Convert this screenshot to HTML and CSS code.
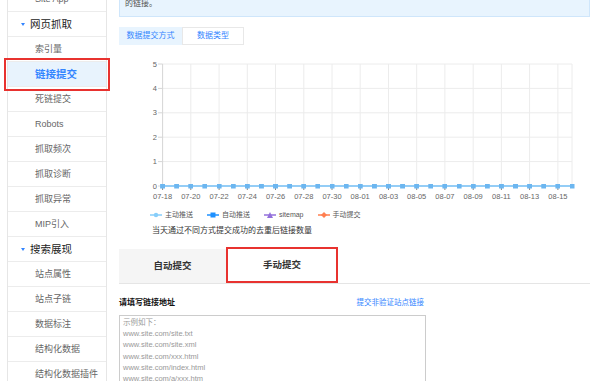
FILE: index.html
```html
<!DOCTYPE html>
<html lang="zh-CN">
<head>
    <meta charset="UTF-8">
    <meta name="viewport" content="width=device-width, initial-scale=1.0">
    <title>链接提交</title>
    <link rel="stylesheet" href="styles.css">
</head>
<body>
<div class="page">
    <!-- 左侧菜单 -->
    <aside class="sidebar">
        <div class="nav-item">Site App</div>
        <div class="nav-group">网页抓取</div>
        <div class="nav-item">索引量</div>
        <div class="nav-item active">链接提交</div>
        <div class="nav-item">死链提交</div>
        <div class="nav-item">Robots</div>
        <div class="nav-item">抓取频次</div>
        <div class="nav-item">抓取诊断</div>
        <div class="nav-item">抓取异常</div>
        <div class="nav-item">MIP引入</div>
        <div class="nav-group">搜索展现</div>
        <div class="nav-item">站点属性</div>
        <div class="nav-item">站点子链</div>
        <div class="nav-item">数据标注</div>
        <div class="nav-item">结构化数据</div>
        <div class="nav-item">结构化数据插件</div>
    </aside>

    <main class="main">
        <div class="notice">
            链接提交工具是网站主动向百度搜索推送数据的工具，本工具可缩短爬虫发现网站链接时间，网站时效性内容建议使用链接提交工具，实时向搜索推送<br>
            的链接。
        </div>

        <div class="sub-tabs">
            <span class="sub-tab on">数据提交方式</span>
            <span class="sub-tab">数据类型</span>
        </div>

        <!-- 趋势图 -->
        <svg class="chart" width="471" height="155" viewBox="0 0 471 155">
            <defs>
                <marker id="sq" markerWidth="5" markerHeight="5" refX="2.5" refY="2.5" markerUnits="userSpaceOnUse">
                    <rect width="5" height="5" fill="#6cb6f0"/>
                </marker>
            </defs>
            <g stroke="#ececec" stroke-width="1">
                <line x1="43.6" y1="14" x2="453" y2="14"/>
                <line x1="43.6" y1="38.4" x2="453" y2="38.4"/>
                <line x1="43.6" y1="62.8" x2="453" y2="62.8"/>
                <line x1="43.6" y1="87.2" x2="453" y2="87.2"/>
                <line x1="43.6" y1="111.6" x2="453" y2="111.6"/>
                <line x1="71.8" y1="14" x2="71.8" y2="136"/>
                <line x1="100.1" y1="14" x2="100.1" y2="136"/>
                <line x1="128.3" y1="14" x2="128.3" y2="136"/>
                <line x1="156.5" y1="14" x2="156.5" y2="136"/>
                <line x1="184.8" y1="14" x2="184.8" y2="136"/>
                <line x1="213" y1="14" x2="213" y2="136"/>
                <line x1="241.2" y1="14" x2="241.2" y2="136"/>
                <line x1="269.5" y1="14" x2="269.5" y2="136"/>
                <line x1="297.7" y1="14" x2="297.7" y2="136"/>
                <line x1="325.9" y1="14" x2="325.9" y2="136"/>
                <line x1="354.2" y1="14" x2="354.2" y2="136"/>
                <line x1="382.4" y1="14" x2="382.4" y2="136"/>
                <line x1="410.6" y1="14" x2="410.6" y2="136"/>
                <line x1="438.9" y1="14" x2="438.9" y2="136"/>
                <line x1="453" y1="14" x2="453" y2="136"/>
            </g>
            <g stroke="#d6d6d6" stroke-width="1">
                <line x1="43.6" y1="14" x2="43.6" y2="136"/>
                <line x1="39" y1="14" x2="43.6" y2="14"/>
                <line x1="39" y1="38.4" x2="43.6" y2="38.4"/>
                <line x1="39" y1="62.8" x2="43.6" y2="62.8"/>
                <line x1="39" y1="87.2" x2="43.6" y2="87.2"/>
                <line x1="39" y1="111.6" x2="43.6" y2="111.6"/>
                <line x1="39" y1="136" x2="43.6" y2="136"/>
            </g>
            <g stroke="#888" stroke-width="1">
                <line x1="43.6" y1="136" x2="43.6" y2="140"/>
                <line x1="71.8" y1="136" x2="71.8" y2="140"/>
                <line x1="100.1" y1="136" x2="100.1" y2="140"/>
                <line x1="128.3" y1="136" x2="128.3" y2="140"/>
                <line x1="156.5" y1="136" x2="156.5" y2="140"/>
                <line x1="184.8" y1="136" x2="184.8" y2="140"/>
                <line x1="213" y1="136" x2="213" y2="140"/>
                <line x1="241.2" y1="136" x2="241.2" y2="140"/>
                <line x1="269.5" y1="136" x2="269.5" y2="140"/>
                <line x1="297.7" y1="136" x2="297.7" y2="140"/>
                <line x1="325.9" y1="136" x2="325.9" y2="140"/>
                <line x1="354.2" y1="136" x2="354.2" y2="140"/>
                <line x1="382.4" y1="136" x2="382.4" y2="140"/>
                <line x1="410.6" y1="136" x2="410.6" y2="140"/>
                <line x1="438.9" y1="136" x2="438.9" y2="140"/>
            </g>
            <g class="axis-y" text-anchor="end">
                <text x="38" y="16.5">5</text>
                <text x="38" y="40.9">4</text>
                <text x="38" y="65.3">3</text>
                <text x="38" y="89.7">2</text>
                <text x="38" y="114.1">1</text>
                <text x="38" y="138.5">0</text>
            </g>
            <polyline fill="none" stroke="#94cdf6" stroke-width="2" marker-start="url(#sq)" marker-mid="url(#sq)" marker-end="url(#sq)"
                points="43.6,136 57.7,136 71.8,136 85.9,136 100.1,136 114.2,136 128.3,136 142.4,136 156.5,136 170.7,136 184.8,136 198.9,136 213,136 227.1,136 241.2,136 255.4,136 269.5,136 283.6,136 297.7,136 311.8,136 325.9,136 340.1,136 354.2,136 368.3,136 382.4,136 396.5,136 410.6,136 424.8,136 438.9,136 453,136"/>
            <g class="axis-x" text-anchor="middle">
                <text x="43.6" y="149">07-18</text>
                <text x="71.8" y="149">07-20</text>
                <text x="100.1" y="149">07-22</text>
                <text x="128.3" y="149">07-24</text>
                <text x="156.5" y="149">07-26</text>
                <text x="184.8" y="149">07-28</text>
                <text x="213" y="149">07-30</text>
                <text x="241.2" y="149">08-01</text>
                <text x="269.5" y="149">08-03</text>
                <text x="297.7" y="149">08-05</text>
                <text x="325.9" y="149">08-07</text>
                <text x="354.2" y="149">08-09</text>
                <text x="382.4" y="149">08-11</text>
                <text x="410.6" y="149">08-13</text>
                <text x="438.9" y="149">08-15</text>
            </g>
        </svg>

        <div class="legend">
            <span class="legend-item">
                <svg width="12" height="6" viewBox="0 0 12 6"><line x1="0" y1="3" x2="12" y2="3" stroke="#87cefa" stroke-width="1.5"/><circle cx="6" cy="3" r="2.2" fill="#87cefa"/></svg>
                主动推送
            </span>
            <span class="legend-item">
                <svg width="12" height="6" viewBox="0 0 12 6"><line x1="0" y1="3" x2="12" y2="3" stroke="#1e90ff" stroke-width="1.5"/><rect x="3.5" y="0.5" width="5" height="5" fill="#1e90ff"/></svg>
                自动推送
            </span>
            <span class="legend-item">
                <svg width="12" height="6" viewBox="0 0 12 6"><line x1="0" y1="3" x2="12" y2="3" stroke="#9370db" stroke-width="1.5"/><polygon points="6,0 9,6 3,6" fill="#9370db"/></svg>
                sitemap
            </span>
            <span class="legend-item">
                <svg width="12" height="6" viewBox="0 0 12 6"><line x1="0" y1="3" x2="12" y2="3" stroke="#ff7f50" stroke-width="1.5"/><polygon points="6,0 9,3 6,6 3,3" fill="#ff7f50"/></svg>
                手动提交
            </span>
        </div>
        <p class="chart-note">当天通过不同方式提交成功的去重后链接数量</p>

        <div class="submit-tabs">
            <div class="submit-tab">自动提交</div>
            <div class="submit-tab on">手动提交</div>
        </div>

        <div class="form">
            <div class="form-head">
                <span class="form-title">请填写链接地址</span>
                <a class="form-link">提交非验证站点链接</a>
            </div>
            <div class="url-box">
                示例如下：<br>
                www.site.com/site.txt<br>
                www.site.com/site.xml<br>
                www.site.com/xxx.html<br>
                www.site.com/index.html<br>
                www.site.com/a/xxx.htm
            </div>
        </div>
    </main>
</div>
</body>
</html>
```

FILE: styles.css
```css
body {
    margin: 0;
    font-family: "Liberation Sans", "Noto Sans CJK SC", sans-serif;
    color: #333;
    background: #fff;
    overflow: hidden;
}
.page {
    display: flex;
    align-items: flex-start;
    margin-top: -13px;
}

/* 左侧菜单 */
.sidebar {
    flex: none;
    width: 98px;
    margin-left: 7px;
    border-left: 1px solid #e6e6e6;
    border-right: 1px solid #e6e6e6;
}
.nav-item,
.nav-group {
    height: 24px;
    line-height: 24px;
    border-bottom: 1px solid #ececec;
    white-space: nowrap;
}
.nav-item {
    padding-left: 27px;
    font-size: 9px;
    color: #666;
}
.nav-group {
    padding-left: 13px;
    font-size: 10.5px;
    color: #222;
}
.nav-group::before {
    content: "";
    display: inline-block;
    vertical-align: middle;
    margin: -2px 5px 0 0;
    border-top: 3px solid #3385ff;
    border-left: 2.5px solid transparent;
    border-right: 2.5px solid transparent;
}
.nav-item.active {
    position: relative;
    z-index: 1;
    background: #e8f3fd;
    color: #3385ff;
    font-weight: bold;
    font-size: 10.5px;
    outline: 2px solid #e8322f;
    outline-offset: 2px;
}

/* 主体 */
.main {
    width: 471px;
    margin-left: 12px;
}
.notice {
    margin-top: -15px;
    padding: 4px 5px 3px;
    line-height: 18px;
    background: #e8f4fe;
    border: 1px solid #cfe6fb;
    font-size: 8px;
    color: #555;
    white-space: nowrap;
    overflow: hidden;
}
.sub-tabs {
    display: flex;
    margin-top: 10px;
}
.sub-tab {
    box-sizing: border-box;
    width: 62px;
    height: 18px;
    line-height: 16px;
    text-align: center;
    font-size: 8px;
    color: #3385ff;
    border: 1px solid #e8e8e8;
}
.sub-tab.on {
    width: 63px;
    background: #e8f4fe;
    border-color: #e8f4fe;
}
.chart {
    display: block;
    margin-top: 5px;
}
.chart text {
    font-family: "Liberation Sans", sans-serif;
    font-size: 7.5px;
    fill: #666;
}
.legend {
    display: flex;
    gap: 14px;
    height: 12px;
    line-height: 12px;
    margin-top: 4px;
    padding-left: 31px;
    font-size: 7px;
    color: #555;
}
.legend-item {
    display: flex;
    align-items: center;
    gap: 3px;
}
.chart-note {
    margin: 4px 0 0;
    padding-left: 33px;
    font-size: 8px;
    line-height: 12px;
    color: #333;
}

/* 提交方式切换 */
.submit-tabs {
    display: flex;
    align-items: flex-end;
    height: 36px;
    margin-top: 10px;
    border-bottom: 1px solid #e5e5e5;
}
.submit-tab {
    width: 107px;
    height: 34px;
    line-height: 34px;
    text-align: center;
    background: #f5f5f5;
    font-size: 9.5px;
    font-weight: bold;
    color: #333;
}
.submit-tab.on {
    width: 112px;
    height: 36px;
    line-height: 36px;
    background: #fff;
    box-shadow: inset 0 0 0 2px #e8322f;
}

.form {
    width: 307px;
}
.form-head {
    display: flex;
    justify-content: space-between;
    margin-top: 13px;
    line-height: 12px;
    font-size: 8px;
}
.form-title {
    font-weight: bold;
    color: #111;
}
.form-link {
    padding-right: 2px;
    font-size: 7.5px;
    color: #3385ff;
}
.url-box {
    height: 100px;
    margin-top: 6px;
    padding: 1px 3px;
    border: 1px solid #ccc;
    font-size: 7.5px;
    line-height: 11.2px;
    color: #999;
}
```
